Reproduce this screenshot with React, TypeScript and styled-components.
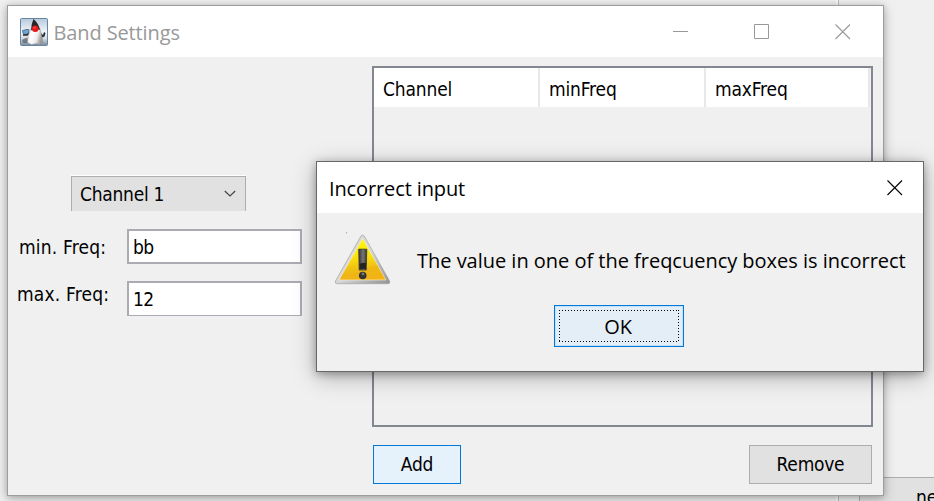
import React from "react";
import styled, { createGlobalStyle } from "styled-components";

const GlobalStyle = createGlobalStyle`
  * { box-sizing: border-box; }
  body { margin: 0; overflow: hidden; }
  button, input { font: inherit; color: inherit; border-radius: 0; outline: none; }
`;

const swingFont = `"DejaVu Sans Condensed", "DejaVu Sans", "Noto Sans", sans-serif`;
const systemFont = `"Open Sans", "Noto Sans", sans-serif`;

const Desktop = styled.main`
  position: relative;
  width: 934px;
  height: 501px;
  overflow: hidden;
  background: #f0f0f0;
  color: #000;
  font-family: ${swingFont};
  font-size: 19px;
`;

const BackgroundDivider = styled.div`
  position: absolute;
  left: 836px;
  top: 0;
  width: 3px;
  height: 501px;
  background: #fafafa;
  border-right: 1px solid #bcbcbc;
`;

const BackgroundButton = styled.button`
  position: absolute;
  left: 859px;
  top: 477px;
  width: 170px;
  height: 40px;
  padding: 0 0 0 56px;
  border: 1px solid #adadad;
  background: #e1e1e1;
  text-align: left;
`;

const Window = styled.section<{ $x: number; $y: number; $w: number; $h: number; $active?: boolean }>`
  position: absolute;
  left: ${(p) => p.$x}px;
  top: ${(p) => p.$y}px;
  width: ${(p) => p.$w}px;
  height: ${(p) => p.$h}px;
  display: flex;
  flex-direction: column;
  background: #f0f0f0;
  border: 1px solid ${(p) => (p.$active ? "#666869" : "#9d9d9d")};
  box-shadow: ${(p) =>
    p.$active
      ? "0 5px 22px rgba(0,0,0,.28), 0 2px 8px rgba(0,0,0,.3)"
      : "0 3px 12px rgba(0,0,0,.22), 0 1px 6px rgba(0,0,0,.18)"};
`;

const TitleBar = styled.header<{ $muted?: boolean }>`
  display: flex;
  align-items: center;
  flex: none;
  height: 51px;
  padding: 0 ${(p) => (p.$muted ? 32 : 20)}px 0 12px;
  background: #fff;
  color: ${(p) => (p.$muted ? "#999" : "#000")};
  font: 20px ${systemFont};
`;

const Title = styled.span<{ $spacing: number; $indent?: number }>`
  flex: 1;
  padding-left: ${(p) => p.$indent ?? 0}px;
  padding-top: 2px;
  letter-spacing: ${(p) => p.$spacing}px;
  white-space: nowrap;
`;

const Controls = styled.div`
  display: flex;
  gap: 65px;
`;

const Glyph = styled.svg`
  display: block;
  flex: none;
`;

const Content = styled.div`
  display: flex;
  flex: 1;
  padding-top: 9px;
`;

const Form = styled.form`
  width: 364px;
  padding-top: 110px;
`;

const Combo = styled.button`
  display: flex;
  align-items: center;
  justify-content: space-between;
  width: 175px;
  height: 35px;
  margin: 0 0 18px 63px;
  padding: 0 9px 0 8px;
  border: solid #adadad;
  border-width: 1px 1px 0;
  background: #e1e1e1;
  box-shadow: 0 -1px #fff;
  letter-spacing: -0.25px;
`;

const Field = styled.label<{ $labelX: number; $lift: number }>`
  display: flex;
  height: 35px;
  margin-bottom: 17px;
  padding-left: ${(p) => p.$labelX}px;

  span {
    width: ${(p) => 119 - p.$labelX}px;
    line-height: 35px;
    margin-top: ${(p) => p.$lift}px;
    letter-spacing: 0.2px;
    white-space: nowrap;
  }
`;

const Input = styled.input<{ $thinBottom?: boolean }>`
  width: 175px;
  height: 35px;
  padding: ${(p) => (p.$thinBottom ? 0 : 1)}px 4px 0;
  border: 2px solid #abacb3;
  border-bottom-width: ${(p) => (p.$thinBottom ? 1 : 2)}px;
  background: #fff;
  letter-spacing: -0.5px;
`;

const Side = styled.div`
  width: 501px;
`;

const Table = styled.div`
  height: 361px;
  border: 2px solid #828790;
`;

const HeaderRow = styled.div`
  display: grid;
  grid-template-columns: 166px 166px 164px;
  height: 39px;
`;

const HeaderCell = styled.div`
  padding: 4px 0 0 9px;
  line-height: 35px;
  background: #fff;
  border-right: 2px solid #e8e8e8;
  letter-spacing: -0.15px;
`;

const Actions = styled.div`
  display: flex;
  justify-content: space-between;
  padding: 18px 1px 0;
`;

const PushButton = styled.button<{ $w: number; $h: number; $hot?: boolean }>`
  width: ${(p) => p.$w}px;
  height: ${(p) => p.$h}px;
  padding: 0 0 2px;
  border: 1px solid ${(p) => (p.$hot ? "#0078d7" : "#adadad")};
  background: ${(p) => (p.$hot ? "#e5f1fb" : "#e1e1e1")};
  letter-spacing: -0.25px;
`;

const DefaultButton = styled(PushButton)`
  padding: 4px;
  background: #e3eef7;
  box-shadow: inset 0 0 0 1px #c3e2f7;
  margin-left: 237px;
`;

const FocusFrame = styled.svg`
  display: block;
  grid-area: 1 / 1;
`;

const ButtonFace = styled.span`
  display: grid;
  place-items: center;
  height: 100%;
`;

const ButtonLabel = styled.span`
  grid-area: 1 / 1;
  padding-right: 2px;
`;

const DialogBody = styled.div`
  display: flex;
  flex-direction: column;
  flex: 1;
  font: 20px ${systemFont};
`;

const MessageRow = styled.div`
  display: flex;
  height: 92px;
  padding: 19px 0 0 17px;
`;

const Message = styled.p`
  margin: 14px 0 0 25px;
  line-height: 30px;
  white-space: nowrap;
  letter-spacing: -0.02px;
`;

const Close = ({ color }: { color: string }) => (
  <Glyph width="16" height="16" viewBox="0 0 16 16">
    <path d="M.5.5 15 15M15 .5.5 15" stroke={color} strokeWidth="1.1" />
  </Glyph>
);

const Duke = () => (
  <Glyph width="28" height="28" viewBox="0 0 28 28">
    <defs>
      <linearGradient id="tile" x2="0" y2="1">
        <stop stopColor="#b6c9dc" />
        <stop offset=".5" stopColor="#f3f5f8" />
        <stop offset=".75" stopColor="#d5dae0" />
        <stop offset="1" stopColor="#75869a" />
      </linearGradient>
      <linearGradient id="belly" x2="1" y2=".3">
        <stop stopColor="#ddd" />
        <stop offset=".35" stopColor="#fff" />
        <stop offset=".7" stopColor="#efefef" />
        <stop offset="1" stopColor="#9a9a9a" />
      </linearGradient>
    </defs>
    <rect x=".5" y=".5" width="27" height="27" rx="1" fill="url(#tile)" stroke="#6685a3" />
    <path d="M2 22q4-3 8-2l-1 5H3z" fill="#5d646d" opacity=".75" />
    <path d="M2.5 12.5 6 11.5h3v4l-3 1-3-1z" fill="#67a8d6" stroke="#4b5966" strokeWidth=".7" />
    <path d="M10 14.500 7 17 3 17" fill="none" stroke="#20252a" strokeWidth="1.600" />
    <path d="m20 14 3 3 1-3 1.500 1-1 3.500-2.500 1-2-2z" fill="#292b30" />
    <path d="M11 10.500h9q1.500 5 2 8.500 1 3 .5 6l-3 2-3-1.500-5 1-4-2q0-8 3.500-14z" fill="url(#belly)" stroke="#888" strokeWidth=".4" />
    <path d="M13.500 1Q18.500 5 20 12q-2.500-1-5-1-2.500 0-4 1.500Q11 6 13.500 1z" fill="#25272a" />
    <circle cx="15.200" cy="10.700" r="3.300" fill="#e3191d" />
    <circle cx="14.500" cy="9.700" r="1.200" fill="#fa4a43" />
  </Glyph>
);

const Warning = () => (
  <Glyph width="58" height="56" viewBox="0 0 58 56">
    <defs>
      <linearGradient id="gold" x2=".1" y2="1">
        <stop stopColor="#fffb00" />
        <stop offset=".45" stopColor="#fbe30d" />
        <stop offset=".78" stopColor="#efbd14" />
        <stop offset="1" stopColor="#f5b719" />
      </linearGradient>
      <linearGradient id="rim" x2="1" y2="1">
        <stop stopColor="#ddd" />
        <stop offset=".5" stopColor="#d8d8d8" />
        <stop offset="1" stopColor="#929292" />
      </linearGradient>
      <linearGradient id="mark">
        <stop stopColor="#333" />
        <stop offset=".55" stopColor="#777" />
        <stop offset="1" stopColor="#333" />
      </linearGradient>
    </defs>
    <circle cx="12.500" cy=".8" r=".7" fill="#aaa" />
    <path d="M27 4q1.600-2 3.200 0L55.600 49q1 2.700-2 2.700H3.500q-3 0-2-2.700z" fill="url(#rim)" stroke="#a0a0a0" strokeWidth=".7" />
    <path d="M28.600 6.500 52 48H5z" fill="url(#gold)" stroke="#f5f0df" strokeWidth=".6" />
    <path d="M9 42q14 0 26-7l8-2 8 14H6z" fill="#e69600" opacity=".13" />
    <path d="M24.700 17.200h8.100l-.6 20.800h-7z" fill="url(#mark)" stroke="#333" strokeWidth=".8" />
    <path d="M25.400 32q4-2 6.800-1l-.4 6h-6z" fill="#242424" />
    <circle cx="28.700" cy="43.500" r="3.800" fill="#333" />
    <circle cx="29" cy="42" r="1.400" fill="#777" />
  </Glyph>
);

export default function App() {
  return (
    <>
      <GlobalStyle />
      <Desktop>
        <BackgroundDivider />
        <BackgroundButton>ne</BackgroundButton>

        <Window $x={7} $y={5} $w={877} $h={491}>
          <TitleBar $muted>
            <Duke />
            <Title $spacing={-0.12} $indent={5.5}>Band Settings</Title>
            <Controls>
              <Glyph width="16" height="16"><path d="M0 7.500h15" stroke="#999" /></Glyph>
              <Glyph width="16" height="16"><path d="M.5.5h14v14H.5z" fill="none" stroke="#999" /></Glyph>
              <Close color="#999" />
            </Controls>
          </TitleBar>
          <Content>
            <Form>
              <Combo type="button">
                Channel 1
                <Glyph width="12" height="8" viewBox="0 0 12 8">
                  <path d="m.8 1 5.200 5 5.200-5" fill="none" stroke="#444" strokeWidth="1.200" />
                </Glyph>
              </Combo>
              <Field $labelX={11} $lift={1}>
                <span>min. Freq:</span>
                <Input defaultValue="bb" />
              </Field>
              <Field $labelX={9} $lift={-4}>
                <span>max. Freq:</span>
                <Input $thinBottom defaultValue="12" />
              </Field>
            </Form>
            <Side>
              <Table>
                <HeaderRow>
                  <HeaderCell>Channel</HeaderCell>
                  <HeaderCell>minFreq</HeaderCell>
                  <HeaderCell>maxFreq</HeaderCell>
                </HeaderRow>
              </Table>
              <Actions>
                <PushButton $w={88} $h={39} $hot>Add</PushButton>
                <PushButton $w={123} $h={39}>Remove</PushButton>
              </Actions>
            </Side>
          </Content>
        </Window>

        <Window $x={316} $y={161} $w={608} $h={211} $active>
          <TitleBar>
            <Title $spacing={-0.12}>Incorrect input</Title>
            <Close color="#000" />
          </TitleBar>
          <DialogBody>
            <MessageRow>
              <Warning />
              <Message>The value in one of the freqcuency boxes is incorrect</Message>
            </MessageRow>
            <DefaultButton $w={130} $h={42} $hot>
              <ButtonFace>
                <FocusFrame width="120" height="32">
                  <path d="M0 .5h120M0 31.500h120M.5 0v32M119.500 0v32" stroke="#000" strokeDasharray="1 2" />
                </FocusFrame>
                <ButtonLabel>OK</ButtonLabel>
              </ButtonFace>
            </DefaultButton>
          </DialogBody>
        </Window>
      </Desktop>
    </>
  );
}
